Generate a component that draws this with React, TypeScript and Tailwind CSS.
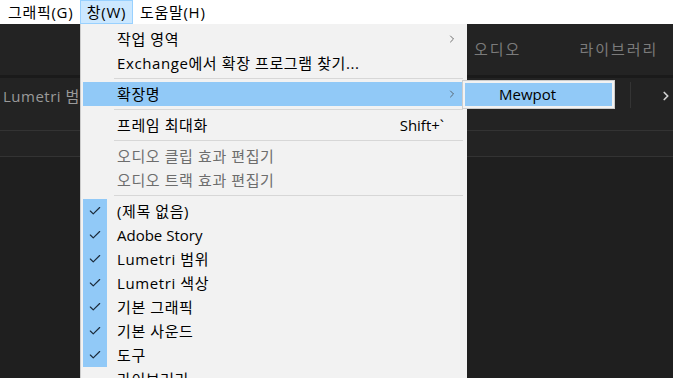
import { Check, ChevronRight } from "lucide-react";

type Item =
  | { kind: "sep" }
  | { kind: "item"; label: string; sub?: boolean; shortcut?: string; disabled?: boolean; checked?: boolean; active?: boolean };

const items: Item[] = [
  { kind: "item", label: "작업 영역", sub: true },
  { kind: "item", label: "Exchange에서 확장 프로그램 찾기..." },
  { kind: "sep" },
  { kind: "item", label: "확장명", sub: true, active: true },
  { kind: "sep" },
  { kind: "item", label: "프레임 최대화", shortcut: "Shift+`" },
  { kind: "sep" },
  { kind: "item", label: "오디오 클립 효과 편집기", disabled: true },
  { kind: "item", label: "오디오 트랙 효과 편집기", disabled: true },
  { kind: "sep" },
  { kind: "item", label: "(제목 없음)", checked: true },
  { kind: "item", label: "Adobe Story", checked: true },
  { kind: "item", label: "Lumetri 범위", checked: true },
  { kind: "item", label: "Lumetri 색상", checked: true },
  { kind: "item", label: "기본 그래픽", checked: true },
  { kind: "item", label: "기본 사운드", checked: true },
  { kind: "item", label: "도구", checked: true },
  { kind: "item", label: "라이브러리" },
];

const font = { fontFamily: '"Open Sans", "Noto Sans CJK KR", sans-serif' };

// hangul glyphs in the original font run a little wider
const hasHangul = (s: string) => /[가-힣]/.test(s);

export default function App() {
  return (
    <div className="relative w-[673px] h-[378px] overflow-hidden bg-[#1f1f1f] text-[15px]" style={font}>
      {/* menu bar */}
      <div className="flex h-[24px] bg-white text-black items-center tracking-[0.7px]">
        <div className="w-[80px] pl-[8px] h-full flex items-center">그래픽(G)</div>
        <div className="w-[53px] h-full flex items-center justify-center bg-[#cce8ff] border border-[#99d1ff]">창(W)</div>
        <div className="pl-[7px] h-full flex items-center">도움말(H)</div>
      </div>

      {/* workspace behind */}
      <div className="flex flex-col">
        <div className="h-[51px] bg-[#232323] flex items-center text-[#7b7b7b] tracking-[2px]">
          <span className="ml-[474px]">오디오</span>
          <span className="ml-[58px]">라이브러리</span>
        </div>
        <div className="h-[3px] bg-[#1a1a1a]" />
        <div className="h-[52px] bg-[#232323] flex items-start text-[#9a9a9a]">
          <span className="ml-[3px] mt-[7px] tracking-[0.5px]">Lumetri 범위</span>
          <div className="ml-auto mt-[4px] h-[26px] w-px bg-[#343434] mr-[28px]" />
          <ChevronRight className="w-[14px] h-[14px] mt-[11px] text-[#cfcfcf]" strokeWidth={3} />
        </div>
        <div className="h-px bg-[#333333]" />
        <div className="h-[25px] bg-[#232323]" />
        <div className="h-px bg-[#333333]" />
      </div>

      {/* dropdown */}
      <div className="absolute left-[80px] top-[24px] w-[387px] h-[360px] bg-[#f2f2f2] border-l border-[#cccccc] pt-[3px] pl-[2px] pr-[2px]">
        {items.map((it, i) =>
          it.kind === "sep" ? (
            <div key={i} className="h-[7px] flex items-center pl-[31px] pr-[2px]">
              <div className="h-px w-full bg-[#d7d7d7]" />
            </div>
          ) : (
            <div
              key={i}
              className={`h-[24px] flex items-center ${it.active ? "bg-[#91c9f7]" : ""} ${it.disabled ? "text-[#6d6d6d]" : "text-black"}`}
            >
              <div className={`w-[24px] h-full flex items-center justify-center ${it.checked ? "bg-[#91c9f7]" : ""}`}>
                {it.checked && <Check className="w-[14px] h-[14px] text-[#1b2a3a]" strokeWidth={2} />}
              </div>
              <span className={`ml-[10px] leading-none ${hasHangul(it.label) ? "tracking-[0.6px]" : ""}`}>{it.label}</span>
              {it.shortcut && <span className="ml-auto mr-[21px] leading-none">{it.shortcut}</span>}
              {it.sub && <ChevronRight className="ml-auto mr-[7px] w-[12px] h-[12px] text-[#444]" strokeWidth={1.5} />}
            </div>
          )
        )}
      </div>

      {/* submenu */}
      <div className="absolute left-[462px] top-[80px] w-[153px] h-[29px] bg-[#f2f2f2] border border-[#cccccc] p-[2px]">
        <div className="h-full bg-[#91c9f7] flex items-center pl-[34px] text-black leading-none">Mewpot</div>
      </div>
    </div>
  );
}
